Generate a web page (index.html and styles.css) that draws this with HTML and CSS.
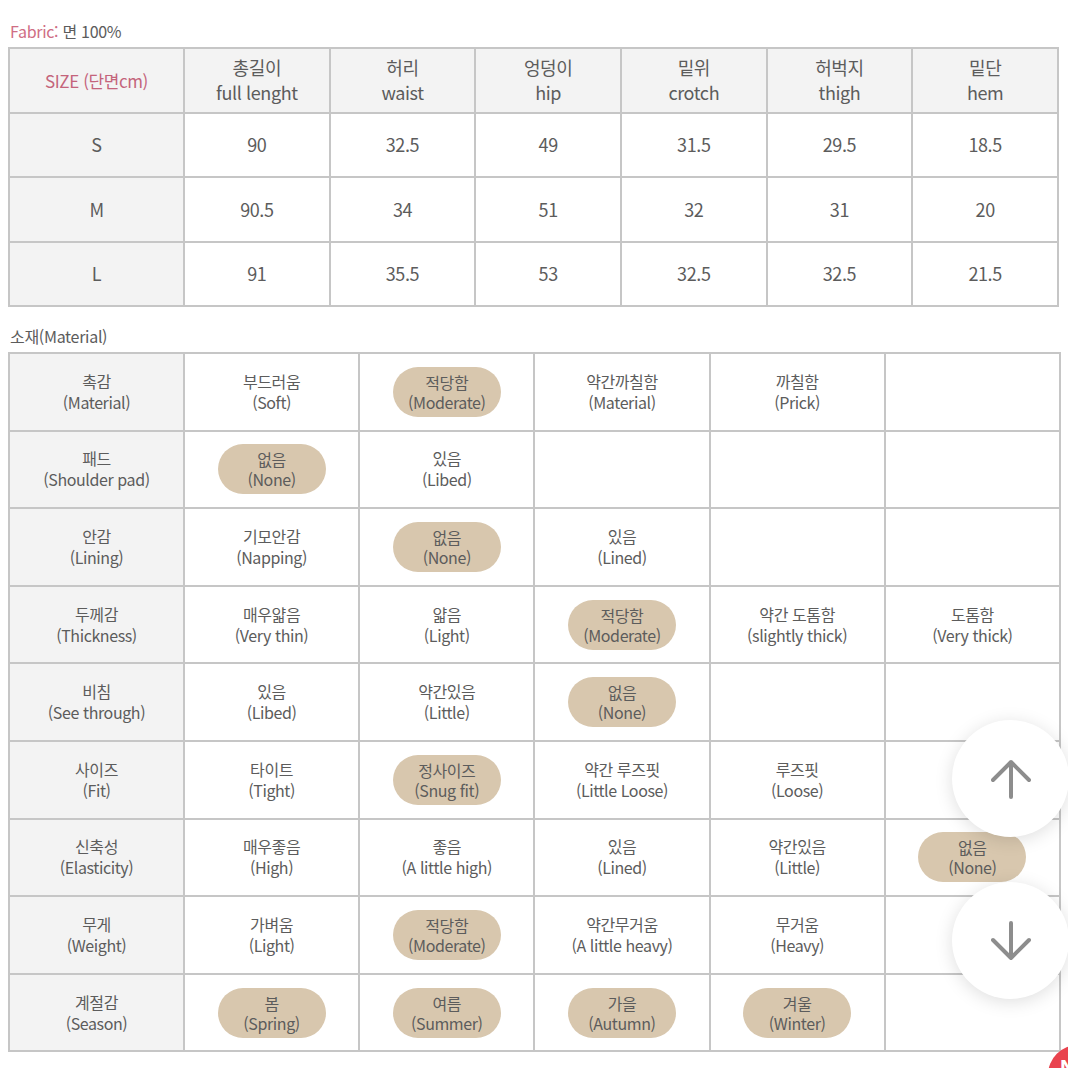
FILE: index.html
```html
<!DOCTYPE html>
<html lang="ko">
<head>
<meta charset="utf-8">
<title>Size &amp; Material</title>
<link rel="stylesheet" href="styles.css">
</head>
<body>
<div class="page">
  <p class="caption"><span class="fabric-key">Fabric:</span> 면 100%</p>
  <table class="size-table">
    <colgroup>
      <col class="c-first"><col><col><col><col><col><col>
    </colgroup>
    <tr class="head">
      <td class="size-key">SIZE (단면cm)</td>
      <td>총길이<br>full lenght</td>
      <td>허리<br>waist</td>
      <td>엉덩이<br>hip</td>
      <td>밑위<br>crotch</td>
      <td>허벅지<br>thigh</td>
      <td>밑단<br>hem</td>
    </tr>
    <tr><td class="label">S</td><td>90</td><td>32.5</td><td>49</td><td>31.5</td><td>29.5</td><td>18.5</td></tr>
    <tr><td class="label">M</td><td>90.5</td><td>34</td><td>51</td><td>32</td><td>31</td><td>20</td></tr>
    <tr><td class="label">L</td><td>91</td><td>35.5</td><td>53</td><td>32.5</td><td>32.5</td><td>21.5</td></tr>
  </table>

  <p class="caption caption-material">소재(Material)</p>
  <table class="mat-table">
    <colgroup>
      <col class="m-first"><col><col><col><col><col>
    </colgroup>
    <tr>
      <td class="label">촉감<br>(Material)</td>
      <td>부드러움<br>(Soft)</td>
      <td><span class="pill">적당함<br>(Moderate)</span></td>
      <td>약간까칠함<br>(Material)</td>
      <td>까칠함<br>(Prick)</td>
      <td></td>
    </tr>
    <tr>
      <td class="label">패드<br>(Shoulder pad)</td>
      <td><span class="pill">없음<br>(None)</span></td>
      <td>있음<br>(Libed)</td>
      <td></td><td></td><td></td>
    </tr>
    <tr>
      <td class="label">안감<br>(Lining)</td>
      <td>기모안감<br>(Napping)</td>
      <td><span class="pill">없음<br>(None)</span></td>
      <td>있음<br>(Lined)</td>
      <td></td><td></td>
    </tr>
    <tr>
      <td class="label">두께감<br>(Thickness)</td>
      <td>매우얇음<br>(Very thin)</td>
      <td>얇음<br>(Light)</td>
      <td><span class="pill">적당함<br>(Moderate)</span></td>
      <td>약간 도톰함<br>(slightly thick)</td>
      <td>도톰함<br>(Very thick)</td>
    </tr>
    <tr>
      <td class="label">비침<br>(See through)</td>
      <td>있음<br>(Libed)</td>
      <td>약간있음<br>(Little)</td>
      <td><span class="pill">없음<br>(None)</span></td>
      <td></td><td></td>
    </tr>
    <tr>
      <td class="label">사이즈<br>(Fit)</td>
      <td>타이트<br>(Tight)</td>
      <td><span class="pill">정사이즈<br>(Snug fit)</span></td>
      <td>약간 루즈핏<br>(Little Loose)</td>
      <td>루즈핏<br>(Loose)</td>
      <td></td>
    </tr>
    <tr>
      <td class="label">신축성<br>(Elasticity)</td>
      <td>매우좋음<br>(High)</td>
      <td>좋음<br>(A little high)</td>
      <td>있음<br>(Lined)</td>
      <td>약간있음<br>(Little)</td>
      <td><span class="pill">없음<br>(None)</span></td>
    </tr>
    <tr>
      <td class="label">무게<br>(Weight)</td>
      <td>가벼움<br>(Light)</td>
      <td><span class="pill">적당함<br>(Moderate)</span></td>
      <td>약간무거움<br>(A little heavy)</td>
      <td>무거움<br>(Heavy)</td>
      <td></td>
    </tr>
    <tr>
      <td class="label">계절감<br>(Season)</td>
      <td><span class="pill">봄<br>(Spring)</span></td>
      <td><span class="pill">여름<br>(Summer)</span></td>
      <td><span class="pill">가을<br>(Autumn)</span></td>
      <td><span class="pill">겨울<br>(Winter)</span></td>
      <td></td>
    </tr>
  </table>
</div>

<button class="fab fab-up" aria-label="맨 위로">
  <svg width="40" height="42" viewBox="0 0 40 42"><path d="M20 4 V39 M2 22 L20 4 L38 22" fill="none" stroke="#8d8d8d" stroke-width="4" stroke-linecap="round" stroke-linejoin="round"/></svg>
</button>
<button class="fab fab-down" aria-label="맨 아래로">
  <svg width="40" height="42" viewBox="0 0 40 42"><path d="M20 3 V38 M2 20 L20 38 L38 20" fill="none" stroke="#8d8d8d" stroke-width="4" stroke-linecap="round" stroke-linejoin="round"/></svg>
</button>
<div class="badge">N</div>
</body>
</html>
```

FILE: styles.css
```css
html, body {
  margin: 0;
  padding: 0;
  overflow: hidden;
  background: #ffffff;
}

body {
  font-family: "Noto Sans CJK KR", "Noto Sans", sans-serif;
  color: #5c5c5c;
  width: 1068px;
  height: 1068px;
  position: relative;
}

.page {
  padding: 19px 0 0 8px;
}

.caption {
  margin: 0 0 4px 2px;
  font-size: 16px;
  line-height: 24px;
  height: 24px;
  letter-spacing: -0.3px;
}

.caption-material {
  margin-top: 17px;
}

.fabric-key {
  color: #cf6d84;
}

table {
  border-collapse: collapse;
  table-layout: fixed;
}

td {
  border: 2px solid #c6c6c6;
  text-align: center;
  vertical-align: middle;
  padding: 0;
}

/* size table */
.size-table {
  width: 1051px;
  font-size: 18px;
  line-height: 25px;
  letter-spacing: -0.4px;
}

.size-table .c-first {
  width: 175px;
}

.size-table tr {
  height: 64.5px;
}

.size-table .head td {
  background: #f3f3f3;
}

.size-table .size-key {
  color: #c4647b;
  font-size: 17px;
}

.label {
  background: #f3f3f3;
}

/* material table */
.mat-table {
  width: 1053px;
  font-size: 16px;
  line-height: 21px;
  letter-spacing: -0.4px;
}

.mat-table .m-first {
  width: 175px;
}

.mat-table tr {
  height: 77.6px;
}

.pill {
  display: inline-flex;
  align-items: center;
  justify-content: center;
  min-width: 108px;
  height: 50px;
  padding: 0 12px;
  box-sizing: border-box;
  border-radius: 25px;
  background: #d8c7ae;
  vertical-align: middle;
  line-height: 20px;
}

/* floating buttons (overlay) */
.fab {
  position: absolute;
  left: 952px;
  width: 117px;
  height: 117px;
  border: none;
  border-radius: 50%;
  background: #ffffff;
  box-shadow: 0 3px 18px rgba(0, 0, 0, 0.13);
  display: flex;
  align-items: center;
  justify-content: center;
  padding: 0;
}

.fab-up {
  top: 720px;
}

.fab-down {
  top: 882px;
}

.badge {
  position: absolute;
  left: 1048px;
  top: 1045px;
  width: 60px;
  height: 60px;
  border-radius: 50%;
  background: #e9434e;
  color: #ffffff;
  font-family: "Liberation Sans", sans-serif;
  font-weight: bold;
  font-size: 22px;
  line-height: 1;
  padding: 12px 0 0 12px;
  box-sizing: border-box;
}
```
